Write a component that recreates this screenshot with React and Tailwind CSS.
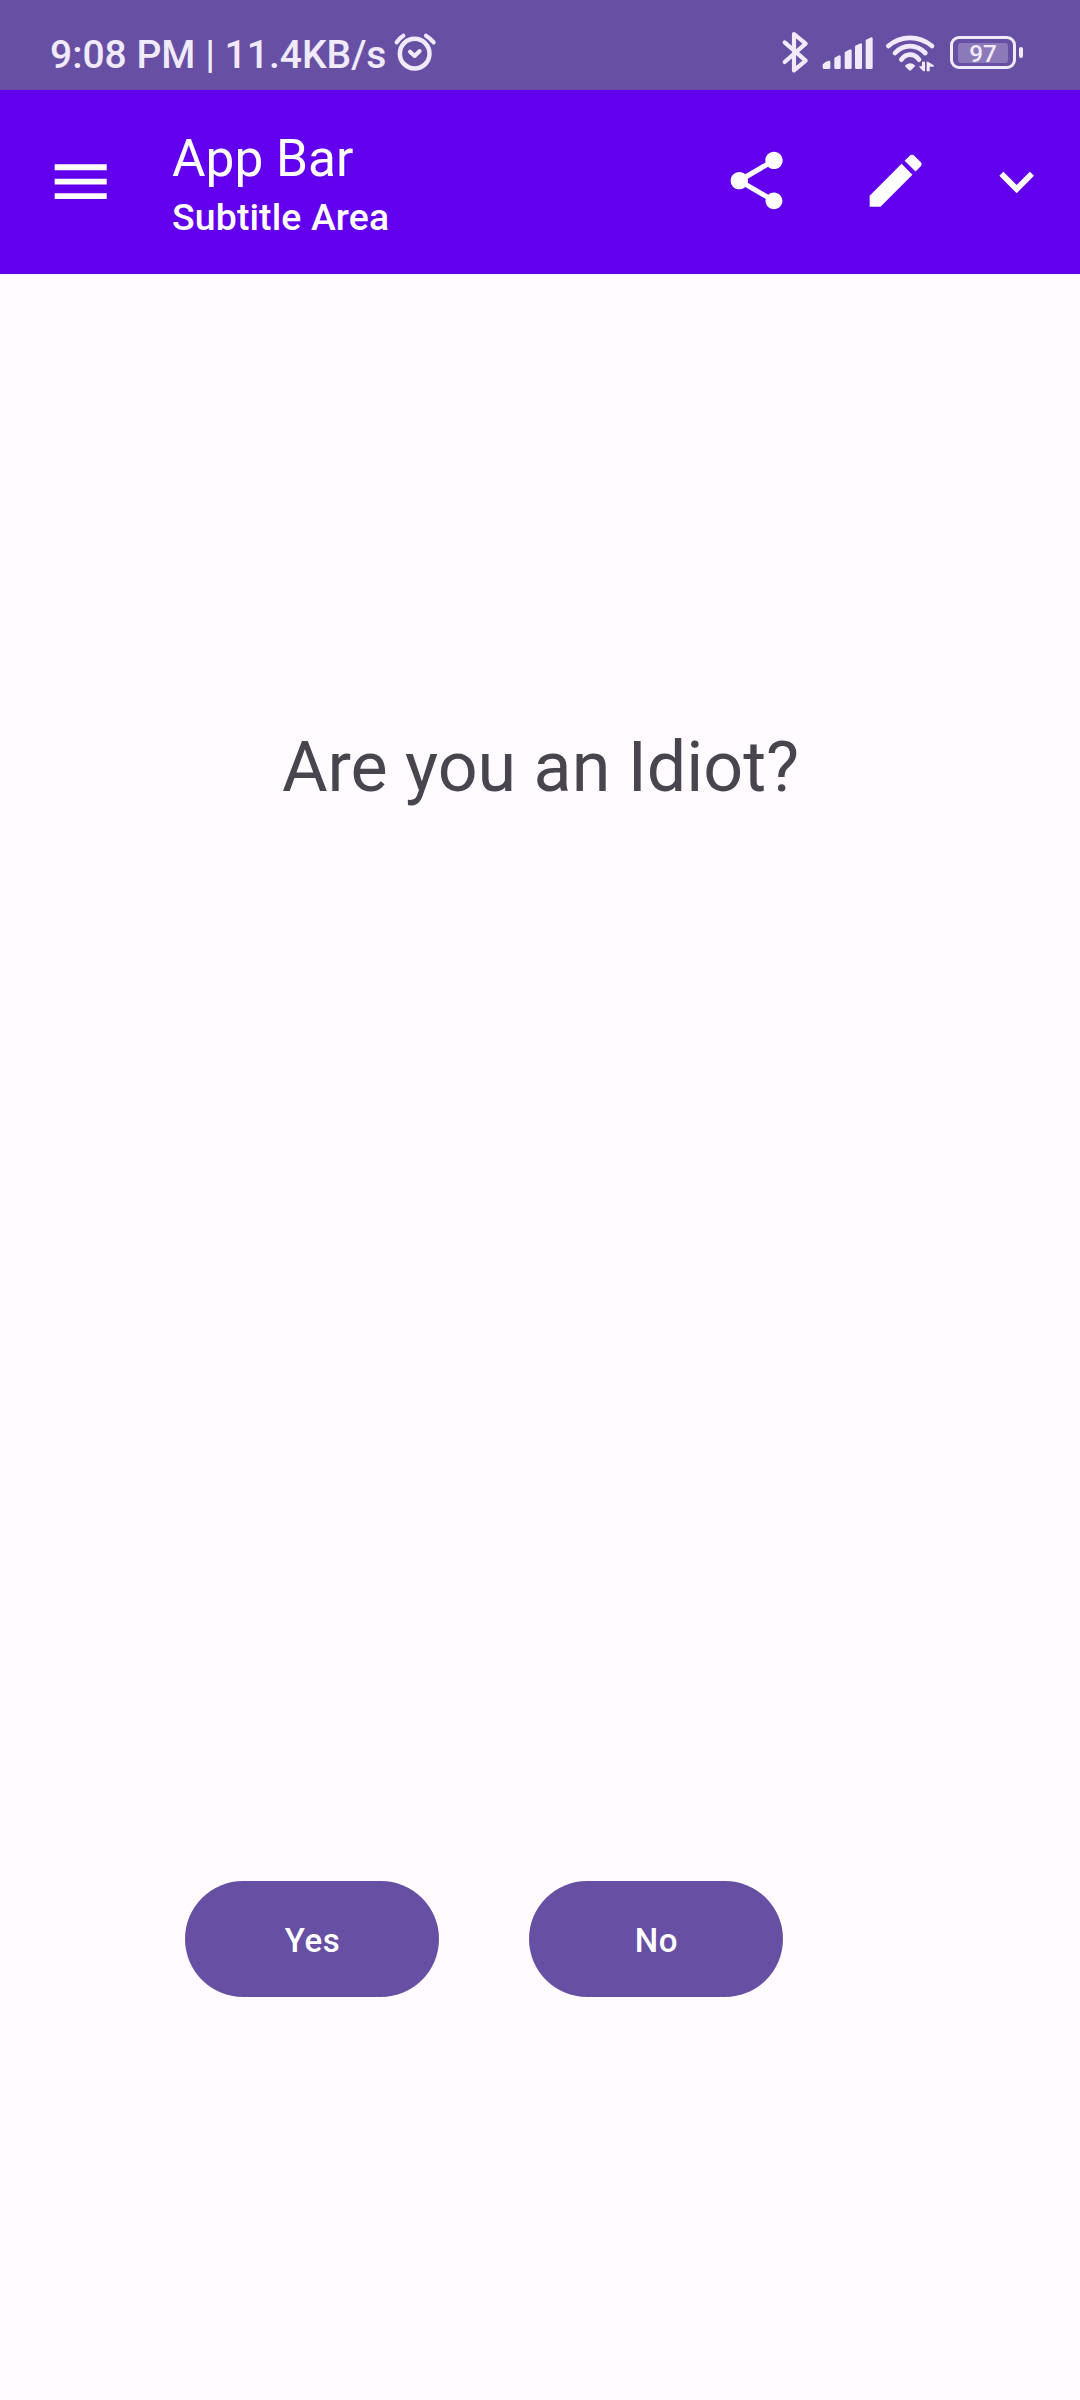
const ink = "#f0eafb";

function AlarmIcon() {
  return (
    <svg className="h-12 w-[54px] shrink-0" viewBox="0 0 162 144" fill="none" stroke={ink} strokeLinecap="round" strokeLinejoin="round">
      <circle cx="80" cy="77" r="44.5" strokeWidth="13.5" />
      <path d="M26 43Q33 31 46 23M114 23Q127 31 137 43" strokeWidth="12.5" />
      <path d="M66 71L80 84L95 69" strokeWidth="12" />
    </svg>
  );
}

function BluetoothIcon() {
  return (
    <svg className="h-12 w-[42px] shrink-0" viewBox="0 0 126 144" fill="none" stroke={ink} strokeWidth="12.5" strokeLinecap="round" strokeLinejoin="round">
      <path d="M26 43L89 98L54 127V18L89 47L26 102" />
    </svg>
  );
}

function SignalIcon() {
  return (
    <svg className="h-12 w-[62px] shrink-0" viewBox="0 0 186 144" fill={ink} stroke={ink} strokeWidth="8" strokeLinejoin="round">
      <path d="M18 111Q23 104 33 102V119H18ZM53 92L64 86V119H53ZM84 75L97 68V119H84ZM115 56L128 50V119H115ZM147 38L160 32V119H147Z" />
    </svg>
  );
}

function WifiIcon() {
  return (
    <svg className="h-12 w-16 shrink-0" viewBox="0 0 192 144" fill="none" stroke={ink}>
      <path d="M25 54Q53 29.5 90 29.5T156 54" strokeWidth="14" strokeLinecap="round" />
      <path d="M45 75Q64 54.5 90 54.5T136 75" strokeWidth="14" strokeLinecap="round" />
      <path d="M64 95Q74 80 90 80T117 95" strokeWidth="14" strokeLinecap="round" />
      <path d="M77 111Q90 100 104 111L105 115L93 127Q90 129 87 127L75 115Z" fill={ink} stroke="none" />
      <path d="M126 101H135V130H130L118 118V115H126ZM140 130V101H144L161 112V116H149V130Z" fill={ink} stroke="none" />
    </svg>
  );
}

function Battery() {
  return (
    <div className="flex h-12 w-[86px] shrink-0 items-center pl-1.5">
      <div className="mt-[1px] flex h-[33px] w-[66px] items-center justify-center rounded-[9px] border-3 border-[#f0eafb]">
        <div className="flex h-5 w-[50px] shrink-0 items-center justify-center rounded-[3px] bg-[#8c79b9] pt-0.5 text-[24.3px] leading-5 font-medium text-[#f0eafb]">
          97
        </div>
      </div>
      <div className="ml-[2.5px] h-[11px] w-[4.5px] rounded-full bg-[#f0eafb]" />
    </div>
  );
}

function MaterialIcon({ path, className }) {
  return (
    <svg className={className} viewBox="0 0 24 24" fill="currentColor">
      <path d={path} />
    </svg>
  );
}

const MENU = "M3 18h18v-2H3v2zm0-5h18v-2H3v2zm0-7v2h18V6H3z";
const SHARE =
  "M18 16.08c-.76 0-1.44.3-1.96.77L8.91 12.7c.05-.23.09-.46.09-.7s-.04-.47-.09-.7l7.05-4.11c.54.5 1.25.81 2.04.81 1.66 0 3-1.34 3-3s-1.34-3-3-3-3 1.34-3 3c0 .24.04.47.09.7L8.04 9.81C7.5 9.31 6.79 9 6 9c-1.66 0-3 1.34-3 3s1.34 3 3 3c.79 0 1.5-.31 2.04-.81l7.12 4.16c-.05.21-.08.43-.08.65 0 1.61 1.31 2.92 2.92 2.92 1.61 0 2.92-1.31 2.92-2.92s-1.31-2.92-2.92-2.92z";
const EDIT =
  "M3 17.25V21h3.75L17.81 9.94l-3.75-3.75L3 17.25zM20.71 7.04c.39-.39.39-1.02 0-1.41l-2.34-2.34c-.39-.39-1.02-.39-1.41 0l-1.83 1.83 3.75 3.75 1.83-1.83z";
const EXPAND = "M16.59 8.59L12 13.17 7.41 8.59 6 10l6 6 6-6z";

function StatusBar() {
  return (
    <div className="flex h-[90px] items-start bg-[#6750a3] pt-7 pr-[50px] pl-[50px]">
      <span className="mt-1 w-[338px] text-[39px] leading-[46px] font-medium whitespace-nowrap text-[#f0eafb]">9:08 PM | 11.4KB/s</span>
      <AlarmIcon />
      <div className="ml-auto flex">
        <BluetoothIcon />
        <SignalIcon />
        <WifiIcon />
        <Battery />
      </div>
    </div>
  );
}

function AppBar() {
  return (
    <header className="flex h-[184px] items-start bg-[#6200ee] text-white">
      <button className="mt-[56.5px] ml-[45.7px]">
        <MaterialIcon path={MENU} className="size-[69.4px]" />
      </button>
      <div className="mt-[39px] ml-[57px] flex flex-col gap-[5px] whitespace-nowrap">
        <h1 className="text-[51.4px] leading-[60px]">App Bar</h1>
        <p className="text-[37.4px] leading-[46px] font-medium tracking-[0.12px]">Subtitle Area</p>
      </div>
      <div className="mt-[55.8px] mr-[29px] ml-auto flex">
        <MaterialIcon path={SHARE} className="size-[69.3px]" />
        <MaterialIcon path={EDIT} className="ml-[69.5px] size-[69.3px]" />
        <MaterialIcon path={EXPAND} className="mt-px ml-[51.8px] size-[69.3px]" />
      </div>
    </header>
  );
}

function AnswerButton({ children }) {
  return (
    <button className="flex h-[116px] w-[254px] items-center justify-center rounded-full bg-[#6750a3] pt-[3px] pl-px text-[33px] leading-10 font-medium tracking-[0.6px] text-white">
      {children}
    </button>
  );
}

export default function App() {
  return (
    <div className="flex h-[2400px] w-[1080px] flex-col overflow-hidden bg-[#fffbff] font-['Roboto',sans-serif]">
      <StatusBar />
      <AppBar />
      <main className="flex flex-col">
        <p className="mt-[451px] pl-px text-center text-[70px] leading-[84px] text-[#49454f]">Are you an Idiot?</p>
        <div className="mt-[1072px] ml-[185px] flex gap-[90px]">
          <AnswerButton>Yes</AnswerButton>
          <AnswerButton>No</AnswerButton>
        </div>
      </main>
    </div>
  );
}
